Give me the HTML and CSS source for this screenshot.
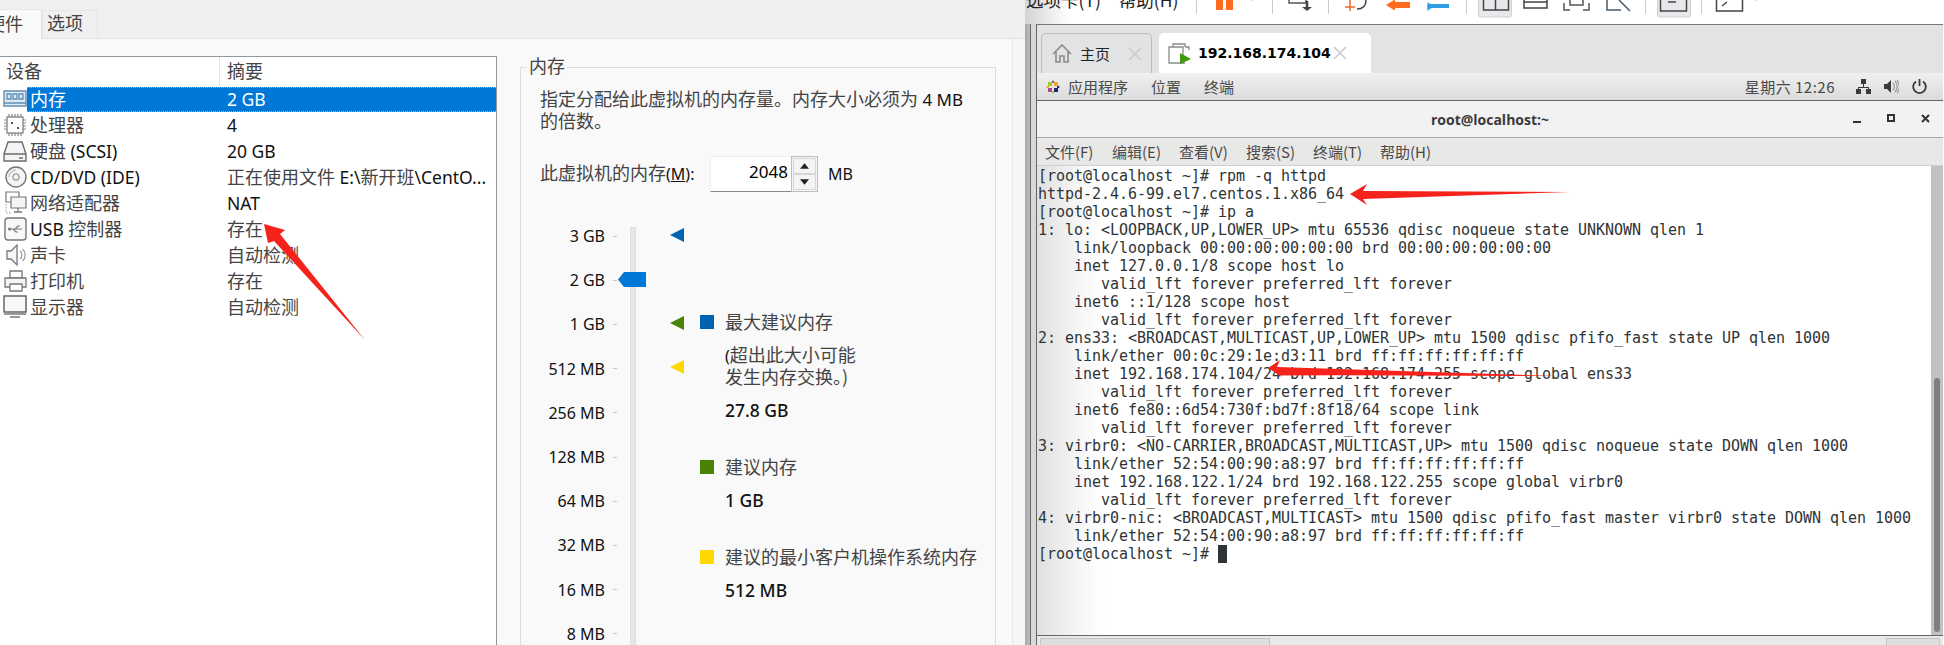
FILE: index.html
```
<!DOCTYPE html>
<html lang="zh-CN">
<head>
<meta charset="utf-8">
<title>VM settings and terminal</title>
<link rel="stylesheet" href="styles.css">
</head>
<body>
<div class="page">
  <section class="dialog">
    <nav class="tabs">
      <div class="tab tab-on"><span class="zh">硬件</span></div>
      <div class="tab tab-off"><span class="zh">选项</span></div>
    </nav>
    <div class="dialog-body">
      <div class="devices">
        <div class="dev-head"><div class="c1"><span class="zh">设备</span></div><div class="c2"><span class="zh">摘要</span></div></div>
        <div class="dev-row sel">
          <svg class="ico" viewBox="0 0 24 24"><path d="M1 4h22v12H1zM1 16v3h22v-3" fill="#dfe9f2" stroke="#5f8fb5" stroke-width="1.4"/><path d="M4 7h4v5H4zM10 7h4v5h-4zM16 7h4v5h-4z" fill="none" stroke="#5f8fb5" stroke-width="1.3"/></svg>
          <div class="cells"><div class="c1"><span class="zh">内存</span></div><div class="c2">2 GB</div></div>
        </div>
        <div class="dev-row">
          <svg class="ico" viewBox="0 0 24 24"><rect x="4" y="4" width="16" height="16" fill="none" stroke="#777" stroke-width="1.2"/><path d="M6 1v3M9 1v3M12 1v3M15 1v3M18 1v3M6 20v3M9 20v3M12 20v3M15 20v3M18 20v3M1 7h3M1 10h3M1 13h3M1 16h3M20 7h3M20 10h3M20 13h3M20 16h3" stroke="#888" stroke-width="1.2"/><path d="M8 9h2v2H8zM14 14h2v2h-2z" fill="#555"/></svg>
          <div class="cells"><div class="c1"><span class="zh">处理器</span></div><div class="c2">4</div></div>
        </div>
        <div class="dev-row">
          <svg class="ico" viewBox="0 0 24 24"><path d="M5 3h14l4 12v7H1v-7zM1 15h22" fill="#f4f4f4" stroke="#6c6c6c" stroke-width="1.4"/><path d="M16 19h4" stroke="#666" stroke-width="1.4"/></svg>
          <div class="cells"><div class="c1"><span class="zh">硬盘</span> (SCSI)</div><div class="c2">20 GB</div></div>
        </div>
        <div class="dev-row">
          <svg class="ico" viewBox="0 0 24 24"><circle cx="13" cy="12" r="10" fill="#f4f4f4" stroke="#777" stroke-width="1.4"/><circle cx="13" cy="12" r="3.2" fill="none" stroke="#777"/><path d="M6 12a7 7 0 0 1 7-7" fill="none" stroke="#aaa"/></svg>
          <div class="cells"><div class="c1">CD/DVD (IDE)</div><div class="c2"><span class="zh">正在使用文件</span> E:\<span class="zh">新开班</span>\CentO...</div></div>
        </div>
        <div class="dev-row">
          <svg class="ico" viewBox="0 0 24 24"><path d="M3 1h13v10H3z" fill="#fff" stroke="#777" stroke-width="1.2"/><path d="M8 6h15v11H8z" fill="#f4f4f4" stroke="#777" stroke-width="1.2"/><path d="M15 17v3M11 21h8" stroke="#777" stroke-width="1.3"/><path d="M3 13v9h6" fill="none" stroke="#999" stroke-dasharray="1.5 1.5"/></svg>
          <div class="cells"><div class="c1"><span class="zh">网络适配器</span></div><div class="c2">NAT</div></div>
        </div>
        <div class="dev-row">
          <svg class="ico" viewBox="0 0 24 24"><rect x="2" y="1" width="21" height="22" rx="3" fill="#f8f8f8" stroke="#777" stroke-width="1.4"/><path d="M6 12h13M12 12l3-3h2M10 12l3 3h2" fill="none" stroke="#777" stroke-width="1.2"/><circle cx="6.5" cy="12" r="1.5" fill="#777"/></svg>
          <div class="cells"><div class="c1">USB <span class="zh">控制器</span></div><div class="c2"><span class="zh">存在</span></div></div>
        </div>
        <div class="dev-row">
          <svg class="ico" viewBox="0 0 24 24"><path d="M4 8h4l6-6v20l-6-6H4z" fill="#f8f8f8" stroke="#777" stroke-width="1.3"/><path d="M17 8a5 5 0 0 1 0 8M19.5 6a8 8 0 0 1 0 12" fill="none" stroke="#999" stroke-width="1.2"/></svg>
          <div class="cells"><div class="c1"><span class="zh">声卡</span></div><div class="c2"><span class="zh">自动检测</span></div></div>
        </div>
        <div class="dev-row">
          <svg class="ico" viewBox="0 0 24 24"><path d="M7 2h12v7H7z" fill="#fff" stroke="#777" stroke-width="1.3"/><path d="M2 9h21v9H2z" fill="#f4f4f4" stroke="#777" stroke-width="1.3"/><path d="M7 15h12v7H7z" fill="#fff" stroke="#777" stroke-width="1.3"/></svg>
          <div class="cells"><div class="c1"><span class="zh">打印机</span></div><div class="c2"><span class="zh">存在</span></div></div>
        </div>
        <div class="dev-row">
          <svg class="ico" viewBox="0 0 24 24"><path d="M1 1h22v16H1z" fill="#f8f8f8" stroke="#666" stroke-width="1.5"/><path d="M1 19h22" stroke="#999" stroke-width="2"/><path d="M7 22h10" stroke="#999" stroke-width="2"/></svg>
          <div class="cells"><div class="c1"><span class="zh">显示器</span></div><div class="c2"><span class="zh">自动检测</span></div></div>
        </div>
      </div>

      <fieldset class="group">
        <legend class="group-title"><span class="zh">内存</span></legend>
        <p class="desc"><span class="zh">指定分配给此虚拟机的内存量。内存大小必须为</span> 4 MB<br><span class="zh">的倍数。</span></p>
        <div class="amount">
          <label class="amount-label"><span class="zh">此虚拟机的内存</span>(<u>M</u>):</label>
          <div class="spin">
            <div class="spin-val">2048</div>
            <div class="spin-btns">
              <div class="spin-btn"><svg class="arrow" viewBox="0 0 10 6"><path d="M5 0l5 6H0z"/></svg></div>
              <div class="spin-btn"><svg class="arrow" viewBox="0 0 10 6"><path d="M5 6l5-6H0z"/></svg></div>
            </div>
          </div>
          <span class="unit">MB</span>
        </div>
        <div class="slider">
          <div class="scale">
            <div class="track"></div>
            <svg class="thumb" viewBox="0 0 28 15"><path d="M6 0h22v15H6L0 7.500z"/></svg>
            <svg class="mark mark-max" viewBox="0 0 14 14"><path d="M0 7L14 0v14z"/></svg>
            <svg class="mark mark-rec" viewBox="0 0 14 14"><path d="M0 7L14 0v14z"/></svg>
            <svg class="mark mark-min" viewBox="0 0 14 14"><path d="M0 7L14 0v14z"/></svg>
            <div class="tick"><span>3 GB</span><i></i></div>
            <div class="tick"><span>2 GB</span><i></i></div>
            <div class="tick"><span>1 GB</span><i></i></div>
            <div class="tick"><span>512 MB</span><i></i></div>
            <div class="tick"><span>256 MB</span><i></i></div>
            <div class="tick"><span>128 MB</span><i></i></div>
            <div class="tick"><span>64 MB</span><i></i></div>
            <div class="tick"><span>32 MB</span><i></i></div>
            <div class="tick"><span>16 MB</span><i></i></div>
            <div class="tick"><span>8 MB</span><i></i></div>
          </div>
          <div class="notes">
            <div class="note">
              <div class="swatch sw-max"></div>
              <div class="note-text">
                <div class="note-name"><span class="zh">最大建议内存</span></div>
                <div class="note-sub">(<span class="zh">超出此大小可能</span><br><span class="zh">发生内存交换。)</span></div>
                <div class="note-val">27.8 GB</div>
              </div>
            </div>
            <div class="note">
              <div class="swatch sw-rec"></div>
              <div class="note-text">
                <div class="note-name"><span class="zh">建议内存</span></div>
                <div class="note-val">1 GB</div>
              </div>
            </div>
            <div class="note">
              <div class="swatch sw-min"></div>
              <div class="note-text">
                <div class="note-name"><span class="zh">建议的最小客户机操作系统内存</span></div>
                <div class="note-val">512 MB</div>
              </div>
            </div>
          </div>
        </div>
      </fieldset>
    </div>
  </section>

  <section class="vm">
    <header class="toolbar">
      <div class="vm-menu"><span>选项卡(T)</span><span>帮助(H)</span></div>
      <svg class="tool-icons" width="580" height="24" viewBox="1190 0 580 24">
        <g stroke="#ccc" stroke-width="1"><path d="M1196.500 0v14M1272.500 0v14M1328.500 0v14M1466.500 0v14M1645.500 0v14M1701.500 0v14"/></g>
        <path d="M1216 0h7v10h-7zM1226 0h7v10h-7z" fill="#ff6a1f"/>
        <path d="M1252 0h1v1h-1zM1756 0h1v1h-1z" fill="#bbb"/>
        <path d="M1289 0v3h17V0" fill="none" stroke="#555" stroke-width="1.500"/>
        <path d="M1307 1v7" stroke="#444" stroke-width="2.500"/><path d="M1302 7h10l-5 4z" fill="#444"/>
        <path d="M1345 7h10M1350 0v11" stroke="#f0682a" stroke-width="1.500"/>
        <path d="M1357 9c6 0 9-3 9-9" fill="none" stroke="#444" stroke-width="1.500"/>
        <path d="M1386 5l8-5h1v2h15v6h-15v2h-1z" fill="#ff6a1f"/>
        <path d="M1428 2c1 2 3 2 5 2h16v4h-16c-2 0-4 1-5 3 -1-1-1-7 0-9z" fill="#2f9ee0"/>
        <rect x="1478.500" y="-6" width="33" height="23" rx="2" fill="#e7e8ec" stroke="#d0d0d0"/>
        <path d="M1483.500 0v10h25V0M1495.500 0v10" fill="none" stroke="#444" stroke-width="1.500"/>
        <path d="M1524 0v8h23V0M1524 2h23" fill="none" stroke="#444" stroke-width="1.500"/>
        <path d="M1564 3v7h6M1583 10h6V3M1570 0v5h13V0" fill="none" stroke="#555" stroke-width="1.500"/>
        <path d="M1607 0v10h14M1619 0l11 11" fill="none" stroke="#4a5a66" stroke-width="1.500"/>
        <rect x="1657.500" y="-6" width="33" height="23" rx="2" fill="#e7e8ec" stroke="#d0d0d0"/>
        <path d="M1660.500 0v11h26V0M1668 2h8" fill="none" stroke="#444" stroke-width="1.500"/>
        <path d="M1716.500 0v11h26V0M1722 6l5-4" fill="none" stroke="#444" stroke-width="1.500"/>
      </svg>
    </header>
    <div class="vm-body">
      <div class="gutter"></div>
      <div class="guest">
        <div class="guest-tabs">
          <div class="gtab gtab-home">
            <svg class="gtab-ico" viewBox="0 0 20 20"><path d="M1 10L10 1l9 9M4 8v10h4v-6h4v6h4V8" fill="none" stroke="#8a8a8a" stroke-width="1.600"/></svg>
            <span class="gtab-home-name">主页</span>
            <svg class="gtab-x" viewBox="0 0 14 14"><path d="M1 1l12 12M13 1L1 13" stroke="#cbcbcb" stroke-width="1.600"/></svg>
          </div>
          <div class="gtab gtab-vm">
            <svg class="gtab-ico gtab-ico-vm" viewBox="0 0 23 21"><path d="M5 4V1h12v3M1 4h14v16H1z" fill="none" stroke="#8a8a8a" stroke-width="1.300"/><path d="M17 4h4v3M17 20h-3" fill="none" stroke="#8a8a8a" stroke-width="1.300"/><path d="M12 10l11 6-11 5z" fill="#3f9b0b"/></svg>
            <span class="gtab-vm-name">192.168.174.104</span>
            <svg class="gtab-x" viewBox="0 0 14 14"><path d="M1 1l12 12M13 1L1 13" stroke="#cbcbcb" stroke-width="1.600"/></svg>
          </div>
        </div>
        <div class="panel">
          <svg class="logo" viewBox="0 0 14 14"><path d="M7 0l2 3H5z" fill="#a14f8c"/><path d="M14 7l-3 2V5z" fill="#262577"/><path d="M7 14l-2-3h4z" fill="#9ccd2a"/><path d="M0 7l3-2v4z" fill="#efa724"/><path d="M2 2h4v4H2z" fill="#9ccd2a"/><path d="M8 2h4v4H8z" fill="#efa724"/><path d="M2 8h4v4H2z" fill="#a14f8c"/><path d="M8 8h4v4H8z" fill="#262577"/></svg>
          <span class="panel-item">应用程序</span>
          <span class="panel-item">位置</span>
          <span class="panel-item">终端</span>
          <span class="clock">星期六 12:26</span>
          <svg class="status-ico" viewBox="0 0 15 15"><path d="M5 0h5v5H5zM0 10h5v5H0zM10 10h5v5h-5zM7 5h1v3h5v2h-1V9H3v1H2V8h5z" fill="#3a3a3a"/></svg>
          <svg class="status-ico" viewBox="0 0 15 15"><path d="M0 5h3l4-4v13l-4-4H0z" fill="#3a3a3a"/><path d="M9 4a5 5 0 0 1 0 7M11 2a8 8 0 0 1 0 11M13 1a10 10 0 0 1 0 13" fill="none" stroke="#9a9a9a" stroke-width="1.200"/></svg>
          <svg class="status-ico" viewBox="0 0 15 15"><path d="M7.500 0v7" stroke="#3a3a3a" stroke-width="1.800"/><path d="M4 2.500a6.300 6.300 0 1 0 7 0" fill="none" stroke="#3a3a3a" stroke-width="1.800"/></svg>
        </div>
        <div class="titlebar">
          <span class="win-title">root@localhost:~</span>
          <div class="win-btns">
            <svg class="win-btn" viewBox="0 0 9 9"><path d="M0 7h8v2H0z" fill="#333"/></svg>
            <svg class="win-btn" viewBox="0 0 9 9"><path d="M1 1h6v6H1z" fill="none" stroke="#333" stroke-width="2"/></svg>
            <svg class="win-btn" viewBox="0 0 9 9"><path d="M1 1l7 7M8 1L1 8" stroke="#333" stroke-width="2"/></svg>
          </div>
        </div>
        <div class="term-menu">
          <span>文件(F)</span><span>编辑(E)</span><span>查看(V)</span><span>搜索(S)</span><span>终端(T)</span><span>帮助(H)</span>
        </div>
        <div class="term-wrap">
<pre class="term">[root@localhost ~]# rpm -q httpd
httpd-2.4.6-99.el7.centos.1.x86_64
[root@localhost ~]# ip a
1: lo: &lt;LOOPBACK,UP,LOWER_UP&gt; mtu 65536 qdisc noqueue state UNKNOWN qlen 1
    link/loopback 00:00:00:00:00:00 brd 00:00:00:00:00:00
    inet 127.0.0.1/8 scope host lo
       valid_lft forever preferred_lft forever
    inet6 ::1/128 scope host
       valid_lft forever preferred_lft forever
2: ens33: &lt;BROADCAST,MULTICAST,UP,LOWER_UP&gt; mtu 1500 qdisc pfifo_fast state UP qlen 1000
    link/ether 00:0c:29:1e:d3:11 brd ff:ff:ff:ff:ff:ff
    inet 192.168.174.104/24 brd 192.168.174.255 scope global ens33
       valid_lft forever preferred_lft forever
    inet6 fe80::6d54:730f:bd7f:8f18/64 scope link
       valid_lft forever preferred_lft forever
3: virbr0: &lt;NO-CARRIER,BROADCAST,MULTICAST,UP&gt; mtu 1500 qdisc noqueue state DOWN qlen 1000
    link/ether 52:54:00:90:a8:97 brd ff:ff:ff:ff:ff:ff
    inet 192.168.122.1/24 brd 192.168.122.255 scope global virbr0
       valid_lft forever preferred_lft forever
4: virbr0-nic: &lt;BROADCAST,MULTICAST&gt; mtu 1500 qdisc pfifo_fast master virbr0 state DOWN qlen 1000
    link/ether 52:54:00:90:a8:97 brd ff:ff:ff:ff:ff:ff
[root@localhost ~]# <span class="cursor"> </span></pre>
          <div class="sb"><div class="sb-thumb"></div></div>
        </div>
        <div class="statusbar"><div class="st-box st-left"></div><div class="st-box st-right"></div></div>
      </div>
    </div>
  </section>

  <svg class="arrows" width="1944" height="645" viewBox="0 0 1944 645">
    <path d="M264 224L285 230 280 234 365 340 274 241 268 243z"/>
    <path d="M1350 194L1367 184 1363 191 1570 192 1363 199 1367 205z"/>
    <path d="M1268 368L1280 360 1277 367 1557 376 1278 375 1283 378z"/>
  </svg>
</div>
</body>
</html>
```
FILE: styles.css
```
* { box-sizing: border-box; }
html, body { margin: 0; padding: 0; background: #fff; }
.page {
  position: relative;
  display: flex;
  width: 1944px;
  height: 645px;
  overflow: hidden;
  font-family: "Noto Sans", "Noto Sans CJK SC", sans-serif;
  font-size: 16px;
  color: #111;
}
.zh { font-family: "Noto Sans CJK SC", sans-serif; font-size: 18px; line-height: 1; color: #444; }

/* left: settings dialog */
.dialog {
  width: 1025px;
  flex: none;
  background: linear-gradient(90deg, #f9f9f9 1012px, #e9e9e9 1012px, #e9e9e9 1013px, #f6f6f6 1013px);
}
.tabs {
  display: flex;
  align-items: flex-end;
  height: 39px;
  margin-left: -18px;
  background: #f0f0f0;
  border-bottom: 1px solid #e2e2e2;
}
.tab { line-height: 26px; }
.tab-on { height: 30px; padding: 2px 0 0 5px; background: #f9f9f9; margin-bottom: -1px; border-right: 1px solid #e2e2e2; border-top: 1px solid #e6e6e6; width: 60px; white-space: nowrap; }
.tab-off { height: 28px; width: 56px; padding-left: 4px; border: 1px solid #e6e6e6; border-bottom: 0; background: #f0f0f0; }
.dialog-body { display: flex; padding-top: 17px; }
.devices {
  width: 497px;
  height: 590px;
  flex: none;
  font-size: 17.500px;
  background: #fff;
  border-top: 1px solid #8f999f;
  border-right: 1px solid #8f999f;
  overflow: hidden;
}
.dev-head { display: flex; height: 29px; align-items: center; line-height: 29px; }
.dev-head .c1 { width: 220px; padding-left: 6px; border-right: 1px solid #e5e5e5; height: 29px; }
.dev-head .c2 { padding-left: 7px; }
.dev-row { display: flex; height: 26px; align-items: center; white-space: nowrap; }
.ico { width: 24px; height: 24px; margin-left: 3px; flex: none; }
.cells { display: flex; flex: 1; height: 26px; align-items: center; line-height: 26px; }
.c1 { width: 193px; padding-left: 3px; flex: none; }
.dev-row .c2 { padding-left: 7px; color: #111; }
.sel .cells { height: 25px; background: #0078d7; color: #fff; border-top: 1px dotted #e9a26a; border-bottom: 1px dotted #e9a26a; }
.sel .zh, .sel .c2 { color: #fff; }

.group {
  width: 476px;
  height: 600px;
  margin: 0 0 0 23px;
  padding: 11px 0 0 19px;
  border: 1px solid #dcdcdc;
  border-bottom: 0;
  min-width: 0;
}
.group-title { margin-left: -13px; padding: 0 2px; line-height: 22px; }
.desc { margin: 0; font-size: 17px; line-height: 22px; white-space: nowrap; }
.amount { display: flex; align-items: center; height: 36px; margin-top: 23px; }
.amount-label { width: 170px; white-space: nowrap; }
.spin { display: flex; width: 108px; height: 36px; background: #fff; border-bottom: 1px solid #8a8a8a; border-top: 1px solid #eee; border-left: 1px solid #eee; }
.spin-val { flex: 1; text-align: right; padding-right: 3px; font-size: 17px; line-height: 29px; color: #000; }
.spin-btns { width: 27px; flex: none; display: flex; flex-direction: column; border: 1px solid #bfbfbf; padding: 1px; background: #f4f4f4; margin-bottom: -1px; margin-top: -1px; }
.spin-btn { flex: 1; border: 1px solid #d7d7d7; display: flex; align-items: center; justify-content: center; }
.arrow { width: 9px; height: 6px; fill: #222; }
.unit { margin-left: 10px; }
.slider { display: flex; margin-top: 22px; }
.scale { position: relative; width: 160px; flex: none; }
.tick { display: flex; align-items: center; height: 44.200px; white-space: nowrap; }
.tick span { width: 65px; text-align: right; }
.tick i { width: 4px; height: 1px; margin-left: 8px; background: #c9c9c9; }
.track { position: absolute; left: 90px; top: 13px; width: 6px; height: 500px; background: #e6e8e6; border: 1px solid #dcdedc; }
.thumb { position: absolute; left: 78px; top: 58px; width: 28px; height: 15px; fill: #0078d7; }
.mark { position: absolute; left: 130px; width: 14px; height: 14px; }
.mark-max { top: 14px; fill: #0063b1; }
.mark-rec { top: 102px; fill: #498205; }
.mark-min { top: 146px; fill: #ffd800; }
.notes { padding-top: 98px; display: flex; flex-direction: column; gap: 36px; }
.note { display: grid; grid-template-columns: 14px auto; column-gap: 11px; }
.swatch { width: 14px; height: 14px; margin-top: 3px; }
.sw-max { background: #0063b1; }
.sw-rec { background: #498205; }
.sw-min { background: #ffd800; }
.note-name, .note-sub, .note-val { line-height: 22px; white-space: nowrap; }
.note-sub { margin-top: 11px; }
.note-val { margin-top: 10px; color: #111; font-size: 17.500px; font-weight: 500; }

/* right: VMware window */
.vm { flex: 1; min-width: 0; display: flex; flex-direction: column; padding-right: 1px; background: #fff; }
.toolbar { display: flex; height: 24px; overflow: hidden; flex: none; background: linear-gradient(90deg, #d4d4d4, #fff 45px); }
.vm-menu { display: flex; width: 165px; gap: 18px; padding-left: 1px; margin-top: -10px; line-height: 20px; font-family: "Noto Sans CJK SC", sans-serif; font-size: 17.500px; white-space: nowrap; height: 20px; color: #222; flex: none; }
.tool-icons { flex: none; }
.vm-body { flex: 1; display: flex; min-height: 0; }
.gutter { width: 11px; flex: none; background: linear-gradient(90deg, #a8a8a8, #bcbcbc 5px, #666 5px, #666 6px, #d8d8d8 6px); }
.guest { flex: 1; min-width: 0; display: flex; flex-direction: column; border-left: 1px solid #666; border-top: 1px solid #777; }
.guest-tabs { display: flex; align-items: flex-end; gap: 7px; height: 48px; padding-left: 4px; background: #e2e3e5; flex: none; }
.gtab { display: flex; align-items: center; height: 40px; border-radius: 5px 5px 0 0; }
.gtab-home { width: 111px; padding-left: 10px; border: 1px solid #bdbdbd; border-bottom: 0; }
.gtab-vm { width: 212px; padding-left: 9px; background: #fff; }
.gtab-ico { width: 20px; height: 20px; flex: none; }
.gtab-ico-vm { width: 23px; height: 21px; }
.gtab-home-name { margin-left: 8px; width: 48px; font-family: "Noto Sans CJK SC", sans-serif; font-size: 15px; color: #222; }
.gtab-vm-name { margin-left: 7px; width: 136px; font-family: "DejaVu Sans", sans-serif; font-weight: 700; font-size: 14px; color: #000; white-space: nowrap; }
.gtab-x { width: 14px; height: 14px; flex: none; }
.gtab-vm .gtab-x { margin-left: -1px; }
.panel { display: flex; align-items: center; height: 28px; flex: none; padding-left: 9px; background: linear-gradient(#f0f0f0, #dbdbdb); border-bottom: 1px solid #666; font-family: "Noto Sans CJK SC", sans-serif; font-size: 15px; color: #4a4a4a; }
.logo { width: 14px; height: 14px; flex: none; margin-right: 8px; }
.panel-item { margin-right: 23px; }
.clock { margin-left: auto; margin-right: 21px; letter-spacing: 0.500px; white-space: nowrap; }
.status-ico { width: 15px; height: 15px; margin-right: 13px; flex: none; }
.status-ico:last-child { margin-right: 16px; }
.titlebar { position: relative; display: flex; align-items: center; justify-content: center; height: 37px; flex: none; background: #f2f2f2; border-bottom: 1px solid #a8a8a8; }
.win-title { font-family: "Open Sans", sans-serif; font-weight: 700; font-size: 14px; color: #3a3a3a; }
.win-btns { position: absolute; right: 13px; top: 13px; display: flex; gap: 25px; }
.win-btn { width: 9px; height: 9px; }
.term-menu { display: flex; gap: 17px; height: 28px; flex: none; align-items: center; padding-left: 8px; background: #e8e8e6; border-bottom: 1px solid #cfcfcf; font-family: "Noto Sans CJK SC", sans-serif; font-size: 15px; color: #4a4a4a; }
.term-menu span { width: 50px; white-space: nowrap; }
.term-wrap { display: flex; height: 469px; flex: none; }
.term {
  flex: 1;
  min-width: 0;
  margin: 0;
  padding: 1px 0 0 1px;
  font-family: "DejaVu Sans Mono", monospace;
  font-size: 15px;
  letter-spacing: -0.030px;
  line-height: 18px;
  color: #2e3436;
  background: linear-gradient(90deg, #e0e0e0, #f8f8f8 45px, #fff 70px);
  overflow: hidden;
}
.cursor { background: #2e3436; }
.sb { width: 12px; flex: none; padding: 212px 3px 0; background: #c2c2c2; }
.sb-thumb { height: 254px; background: #7f7f7f; border-radius: 3px; }
.statusbar { flex: 1; display: flex; justify-content: space-between; align-items: flex-start; padding: 2px 3px 0 3px; background: #e9e9e9; border-top: 1px solid #666; }
.st-box { height: 10px; border: 1px solid #c4c4c4; background: #dedede; }
.st-left { width: 230px; }
.st-right { width: 54px; }

.arrows { position: absolute; left: 0; top: 0; fill: #f5231c; pointer-events: none; }
```
